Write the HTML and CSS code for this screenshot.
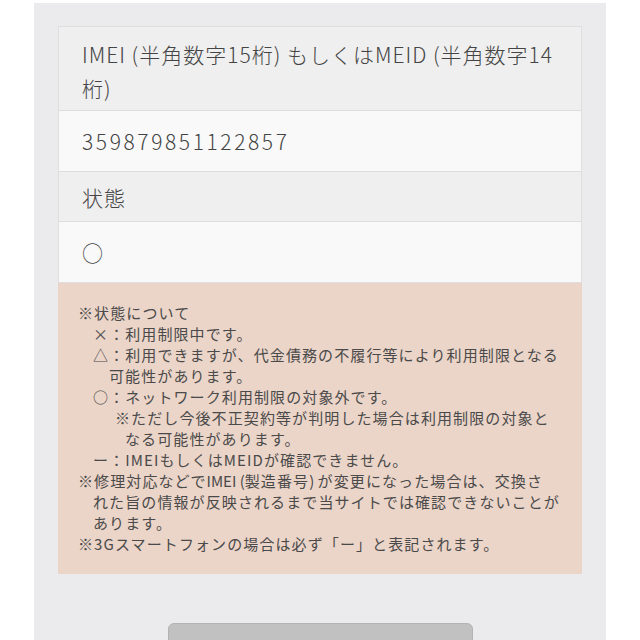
FILE: index.html
```html
<!DOCTYPE html>
<html lang="ja">
<head>
<meta charset="utf-8">
<title>IMEI</title>
<link rel="stylesheet" href="styles.css">
</head>
<body>
<div class="panel">
  <div class="table">
    <div class="row head two">IMEI (半角数字15桁) もしくはMEID (半角数字14<br>桁)</div>
    <div class="row value"><span class="num">359879851122857</span></div>
    <div class="row head">状態</div>
    <div class="row value">○</div>
  </div>
  <div class="note">
    <div class="l0">※状態について</div>
    <div class="l1">×：利用制限中です。</div>
    <div class="l1">△：利用できますが、代金債務の不履行等により利用制限となる</div>
    <div class="l2">可能性があります。</div>
    <div class="l1">○：ネットワーク利用制限の対象外です。</div>
    <div class="l3">※ただし今後不正契約等が判明した場合は利用制限の対象と</div>
    <div class="l4">なる可能性があります。</div>
    <div class="l1">ー：IMEIもしくはMEIDが確認できません。</div>
    <div class="l0">※修理対応などで<span class="lat">IMEI (</span>製造番号<span class="lat">) </span>が変更になった場合は、交換さ</div>
    <div class="l1">れた旨の情報が反映されるまで当サイトでは確認できないことが</div>
    <div class="l1">あります。</div>
    <div class="l0">※3Gスマートフォンの場合は必ず「ー」と表記されます。</div>
  </div>
  <div class="actions">
    <div class="button"></div>
  </div>
</div>
</body>
</html>
```
FILE: styles.css
```css
html, body {
  margin: 0;
  padding: 0;
  background: #ffffff;
  font-family: "Noto Sans CJK JP", "Noto Sans", sans-serif;
  color: #444;
}

.panel {
  margin: 3px 0 0 34px;
  width: 572px;
  min-height: 700px;
  background: #ebebed;
  padding: 23px 24px 0;
  box-sizing: border-box;
}

.table {
  background: #fff;
  border: 1px solid #dedede;
  border-bottom: none;
}

.row {
  font-size: 21px;
  font-weight: 300;
  line-height: 34px;
  letter-spacing: 1px;
  padding: 13px 23px 13px;
  border-bottom: 1px solid #dedede;
  white-space: nowrap;
}

.row.head {
  background: #efefef;
  padding: 8px 23px 7px;
}

.row.head.two {
  padding: 10px 23px 5px;
}

.row.value {
  background: #f9f9f9;
}

.num {
  letter-spacing: 2.6px;
}

.note {
  background: #ebd4c8;
  padding: 19px 20px 20px;
  font-size: 15px;
  line-height: 21px;
  letter-spacing: 1.1px;
  color: #4a4a4a;
  white-space: nowrap;
}

.lat {
  letter-spacing: 0;
}

.l1 { padding-left: 15px; }
.l2 { padding-left: 31px; }
.l3 { padding-left: 37px; }
.l4 { padding-left: 47px; }

.actions {
  display: flex;
  justify-content: center;
  padding-top: 49px;
}

.button {
  width: 305px;
  height: 48px;
  background: #c1c1c1;
  border: 1px solid #b3b3b3;
  border-radius: 6px;
  box-sizing: border-box;
}
```
